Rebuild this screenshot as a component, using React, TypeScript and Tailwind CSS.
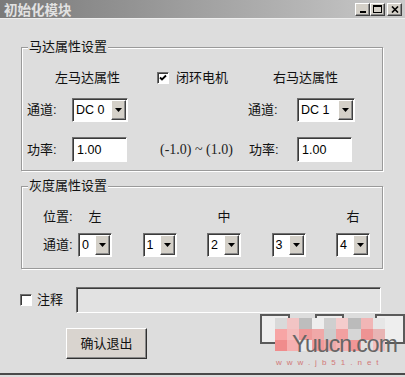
import React from "react";

const sunken =
  "border border-t-[#707070] border-l-[#707070] border-b-white border-r-white shadow-[inset_1px_1px_0_#3a3a3a] bg-white";
const raised =
  "border border-t-white border-l-white border-b-[#404040] border-r-[#404040] shadow-[inset_-1px_-1px_0_#8a8a8a] bg-[#d4d0c8]";

const blocks = [
  "#d9d9d9", "#f2c4c4", "#bdbdbd", "#eeeeee", "#cfcfcf", "#f4cccc", "#bbbbbb", "#f1b6b6", "#e6e6e6",
  "#f7a5a5", "#f4bcbc", "#ef9a9a", "#f0a8a8", "#cccccc", "#f2a0a0", "#d6d6d6", "#ee9393", "#e8b4b4",
  "#f08c8c", "#f6b0b0", "#e9e9e9", "#f29a9a", "#eeaaaa", "#f4b4b4", "#f19696", "#e0e0e0", "#f3c0c0",
];

function Arrow() {
  return (
    <svg width="7" height="4" viewBox="0 0 7 4">
      <polygon points="0,0 7,0 3.5,4" fill="#000" />
    </svg>
  );
}

function Combo({ value, className }: { value: string; className: string }) {
  return (
    <div className={`flex h-[24px] ${sunken} ${className}`}>
      <span className="flex-1 pl-[3px] pt-[1px] text-[12.5px] leading-[20px] text-black">{value}</span>
      <span className={`w-[15px] my-[1px] mr-[1px] flex items-center justify-center ${raised}`}>
        <Arrow />
      </span>
    </div>
  );
}

function Field({ value, className }: { value: string; className: string }) {
  return (
    <div className={`h-[25px] pl-[4px] pt-[2px] text-[12.5px] leading-[20px] text-black ${sunken} ${className}`}>
      {value}
    </div>
  );
}

function CheckBox({ checked }: { checked: boolean }) {
  return (
    <span className={`w-[12px] h-[12px] flex items-center justify-center ${sunken}`}>
      {checked && (
        <svg width="8" height="8" viewBox="0 0 8 8">
          <polyline points="1,3.5 3,5.5 7,1.5" fill="none" stroke="#000" strokeWidth="1.8" />
        </svg>
      )}
    </span>
  );
}

export default function App() {
  return (
    <div className="relative w-[405px] h-[377px] overflow-hidden flex flex-col bg-[#dddddd] font-['Liberation_Sans','Noto_Sans_CJK_SC',sans-serif] text-[#111]">
      {/* Title bar */}
      <div className="h-[19px] flex items-center bg-linear-to-r from-[#7a7a7a] to-[#cacaca] border-b border-[#eeeeee]">
        <span className="pl-[4px] text-[13.5px] leading-[19px] font-bold text-[#e2e2e2] font-['Noto_Sans_CJK_SC',serif] [text-shadow:0_0_1px_#888]">
          初始化模块
        </span>
        <div className="ml-auto mr-[3px] flex items-center">
          <span className={`w-[15px] h-[13px] flex items-end justify-center pb-[2px] ${raised}`}>
            <span className="w-[6px] h-[2px] bg-black" />
          </span>
          <span className={`w-[15px] h-[13px] flex items-center justify-center ${raised}`}>
            <span className="w-[9px] h-[8px] border border-black border-t-2" />
          </span>
          <span className={`ml-[2px] w-[15px] h-[13px] flex items-center justify-center ${raised}`}>
            <svg width="8" height="7" viewBox="0 0 8 7">
              <path d="M1 0.5 L7 6.5 M7 0.5 L1 6.5" stroke="#000" strokeWidth="1.6" />
            </svg>
          </span>
        </div>
      </div>

      {/* 马达属性设置 */}
      <fieldset className="mt-[21px] ml-[21px] w-[362px] border border-[#9a9a9a] shadow-[inset_1px_1px_0_#fff,1px_1px_0_#fff] pb-[8px]">
        <legend className="ml-[6px] px-[1px] text-[13px] leading-[14px] bg-[#dddddd]">马达属性设置</legend>
        <div className="mt-[16px] h-[16px] flex items-center text-[13px]">
          <span className="pl-[33px] w-[135px]">左马达属性</span>
          <CheckBox checked />
          <span className="ml-[7px] w-[97px]">闭环电机</span>
          <span>右马达属性</span>
        </div>
        <div className="mt-[12px] h-[24px] flex items-center text-[13px]">
          <span className="pl-[5px] w-[50px]">通道:</span>
          <Combo value="DC 0" className="w-[56px]" />
          <span className="ml-[120px] w-[49px]">通道:</span>
          <Combo value="DC 1" className="w-[58px]" />
        </div>
        <div className="mt-[15px] h-[25px] flex items-center text-[13px]">
          <span className="pl-[5px] w-[50px]">功率:</span>
          <Field value="1.00" className="w-[55px]" />
          <span className="w-[122px] pl-[33px] text-[14px] font-['Liberation_Serif',serif] text-[#222]">
            (-1.0) ~ (1.0)
          </span>
          <span className="w-[48px]">功率:</span>
          <Field value="1.00" className="w-[55px]" />
        </div>
      </fieldset>

      {/* 灰度属性设置 */}
      <fieldset className="mt-[8px] ml-[21px] w-[362px] border border-[#9a9a9a] shadow-[inset_1px_1px_0_#fff,1px_1px_0_#fff] pb-[11px]">
        <legend className="ml-[6px] px-[1px] text-[13px] leading-[14px] bg-[#dddddd]">灰度属性设置</legend>
        <div className="mt-[16px] h-[16px] flex items-center text-[13px]">
          <span className="pl-[21px] w-[56px]">位置:</span>
          <div className="flex gap-[30.5px]">
            <span className="w-[34px] text-center">左</span>
            <span className="w-[34px]" />
            <span className="w-[34px] text-center">中</span>
            <span className="w-[34px]" />
            <span className="w-[34px] text-center">右</span>
          </div>
        </div>
        <div className="mt-[8px] h-[24px] flex items-center text-[13px]">
          <span className="pl-[21px] w-[56px]">通道:</span>
          <div className="flex gap-[30.5px]">
            {["0", "1", "2", "3", "4"].map((v) => (
              <Combo key={v} value={v} className="w-[34px]" />
            ))}
          </div>
        </div>
      </fieldset>

      {/* 注释 */}
      <div className="mt-[18px] h-[26px] flex items-center pl-[20px] text-[13px]">
        <CheckBox checked={false} />
        <span className="ml-[5px] w-[39px]">注释</span>
        <div className={`h-[26px] w-[305px] !bg-[#e2e2e2] ${sunken}`} />
      </div>

      {/* Buttons */}
      <div className="mt-[1px] flex items-start">
        <button
          className={`ml-[66px] mt-[14px] w-[94px] h-[31px] text-[13px] ${raised} !bg-[#d9d4cf] !border-b-[#303030] !border-r-[#303030]`}
        >
          确认退出
        </button>
        <span className="ml-[113px] w-[34px] h-[30px] border-2 border-[#5a5a5a] bg-[#eeeeee]" />
        <span className="ml-[25px] w-[34px] h-[30px] border-2 border-[#5a5a5a] bg-[#eeeeee]" />
        <span className="ml-[31px] w-[34px] h-[30px] border-2 border-[#5a5a5a] bg-[#eeeeee]" />
      </div>

      <div className="mt-auto mb-[2px] h-[2px] bg-[#4a4a4a]" />

      {/* watermark */}
      <div className="absolute left-[275px] top-[318px] w-[110px] h-[33px] grid grid-cols-9 grid-rows-3 pointer-events-none">
        {blocks.map((c, i) => (
          <span key={i} style={{ backgroundColor: c }} />
        ))}
      </div>
      <div className="absolute left-[292px] top-[333px] whitespace-nowrap text-[23px] leading-[23px] tracking-[-1px] text-[#666666] pointer-events-none">
        Yuucn.com
      </div>
      <div className="absolute left-[276px] top-[358px] whitespace-nowrap text-[8px] leading-[9px] tracking-[5px] text-[#d06060] opacity-80 pointer-events-none">
        www.jb51.net
      </div>
    </div>
  );
}
